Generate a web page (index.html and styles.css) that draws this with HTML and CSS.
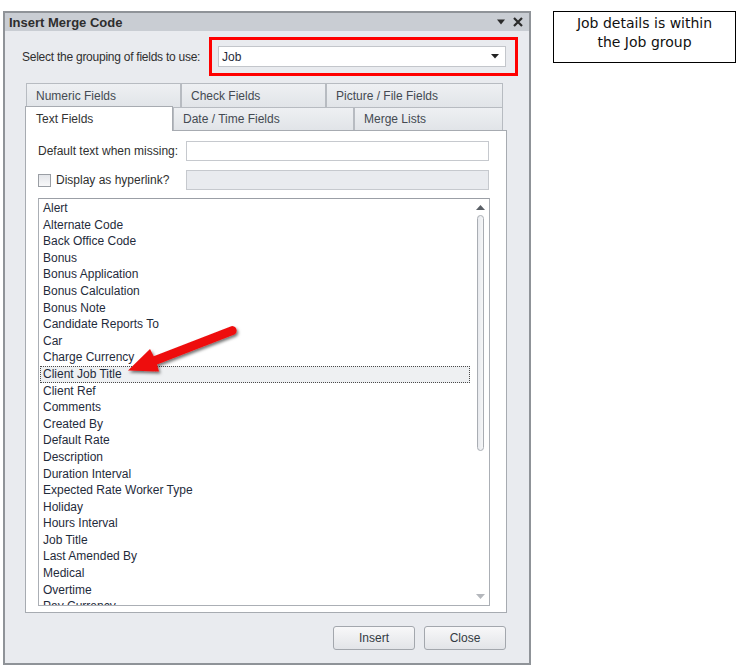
FILE: index.html
```html
<!DOCTYPE html>
<html>
<head>
<meta charset="utf-8">
<link rel="stylesheet" href="styles.css">
</head>
<body>
<div class="dialog">
  <div class="titlebar">
    <span class="title">Insert Merge Code</span>
    <span class="title-icons">
      <svg width="8" height="6" viewBox="0 0 8 6"><path d="M0 0.5 H8 L4 5.5 Z" fill="#2b2b2b"/></svg>
      <svg width="10" height="10" viewBox="0 0 10 10"><path d="M1 1 L9 9 M9 1 L1 9" stroke="#2b2b2b" stroke-width="2.2"/></svg>
    </span>
  </div>
  <div class="group-row">
    <span class="label">Select the grouping of fields to use:</span>
    <div class="redbox">
      <div class="combo">
        <span>Job</span>
        <svg width="8" height="5" viewBox="0 0 8 5"><path d="M0 0 H8 L4 4.5 Z" fill="#222"/></svg>
      </div>
    </div>
  </div>
  <div class="tabs">
    <div class="tab-row row1">
      <div class="tab w155">Numeric Fields</div>
      <div class="tab w145">Check Fields</div>
      <div class="tab w177">Picture / File Fields</div>
    </div>
    <div class="tab-row row2">
      <div class="tab sel w148">Text Fields</div>
      <div class="tab w181">Date / Time Fields</div>
      <div class="tab w149">Merge Lists</div>
    </div>
    <div class="panel">
      <div class="form-row">
        <span class="flabel">Default text when missing:</span>
        <div class="input"></div>
      </div>
      <div class="form-row row-check">
        <span class="flabel check-label"><span class="checkbox"></span>Display as hyperlink?</span>
        <div class="input disabled"></div>
      </div>
      <div class="listbox">
        <div class="items">
          <div class="item">Alert</div>
          <div class="item">Alternate Code</div>
          <div class="item">Back Office Code</div>
          <div class="item">Bonus</div>
          <div class="item">Bonus Application</div>
          <div class="item">Bonus Calculation</div>
          <div class="item">Bonus Note</div>
          <div class="item">Candidate Reports To</div>
          <div class="item">Car</div>
          <div class="item">Charge Currency</div>
          <div class="item selected">Client Job Title</div>
          <div class="item">Client Ref</div>
          <div class="item">Comments</div>
          <div class="item">Created By</div>
          <div class="item">Default Rate</div>
          <div class="item">Description</div>
          <div class="item">Duration Interval</div>
          <div class="item">Expected Rate Worker Type</div>
          <div class="item">Holiday</div>
          <div class="item">Hours Interval</div>
          <div class="item">Job Title</div>
          <div class="item">Last Amended By</div>
          <div class="item">Medical</div>
          <div class="item">Overtime</div>
          <div class="item">Pay Currency</div>
        </div>
        <div class="scrollbar">
          <svg class="arrow-up" width="9" height="5" viewBox="0 0 9 5"><path d="M0 5 H9 L4.5 0 Z" fill="#5a5f66"/></svg>
          <div class="thumb"></div>
          <svg class="arrow-down" width="9" height="5" viewBox="0 0 9 5"><path d="M0 0 H9 L4.5 5 Z" fill="#b4b7bc"/></svg>
        </div>
      </div>
    </div>
  </div>
  <div class="buttons">
    <div class="btn">Insert</div>
    <div class="btn">Close</div>
  </div>
  <svg class="pointer" width="140" height="70" viewBox="100 310 140 70">
    <defs>
      <filter id="sh" x="-20%" y="-30%" width="140%" height="160%">
        <feDropShadow dx="1.5" dy="2" stdDeviation="1.6" flood-color="#000" flood-opacity="0.55"/>
      </filter>
    </defs>
    <path filter="url(#sh)" fill="#ee1111" d="M126 370.5 L157 371.5 L155 364.6 L231.8 334.8 A4.4 4.4 0 0 0 228.6 326.4 L151.7 356.2 L148 349 Z"/>
  </svg>
</div>
<div class="note">Job details is within<br>the Job group</div>
</body>
</html>
```

FILE: styles.css
```css
html, body {
  margin: 0;
  padding: 0;
  background: #ffffff;
}
body {
  display: flex;
  align-items: flex-start;
  font-family: "Liberation Sans", Arial, sans-serif;
  font-size: 12px;
  color: #333333;
}
.dialog {
  position: relative;
  box-sizing: border-box;
  margin: 11px 0 0 3px;
  width: 528px;
  height: 654px;
  border: 2px solid #8f9398;
  background: #e9ebef;
  display: flex;
  flex-direction: column;
}
.titlebar {
  height: 18px;
  background: #c9cdd3;
  display: flex;
  align-items: center;
  justify-content: space-between;
  padding: 0 6px 0 4px;
}
.title {
  font-weight: bold;
  font-size: 13px;
  color: #2e2e2e;
}
.title-icons {
  display: flex;
  align-items: center;
  gap: 8px;
}
.group-row {
  display: flex;
  align-items: center;
  justify-content: space-between;
  margin-top: 6px;
  padding: 0 11px 0 17px;
}
.label {
  color: #2f2f2f;
  white-space: nowrap;
  flex-shrink: 0;
  letter-spacing: -0.25px;
}
.redbox {
  box-sizing: border-box;
  flex-shrink: 0;
  width: 309px;
  height: 39px;
  border: 3px solid #ff0000;
  padding: 6px 9px 6px 6px;
}
.combo {
  box-sizing: border-box;
  height: 21px;
  background: #ffffff;
  border: 1px solid #c3c6cb;
  display: flex;
  align-items: center;
  justify-content: space-between;
  padding: 0 6px 0 3px;
  color: #1f2b3b;
}
.tabs {
  margin: 7px 0 0 20px;
  width: 482px;
}
.tab-row {
  display: flex;
}
.row1 {
  padding-left: 1px;
  height: 24px;
}
.row2 {
  height: 23px;
}
.tab {
  box-sizing: border-box;
  border: 1px solid #b7bbc1;
  border-bottom: none;
  background: linear-gradient(#eef0f3, #e1e4e8);
  color: #444a52;
  padding: 5px 0 0 9px;
  height: 100%;
}
.row2 .tab {
  padding-top: 4px;
}
.tab.sel {
  background: #ffffff;
  height: 25px;
  margin-top: -1px;
  position: relative;
  z-index: 1;
  padding: 5px 0 0 10px;
  color: #333333;
  border-color: #a7abb1;
}
.w155 { width: 155px; }
.w145 { width: 145px; }
.w177 { width: 177px; }
.w148 { width: 148px; }
.w181 { width: 181px; }
.w149 { width: 149px; }
.panel {
  box-sizing: border-box;
  width: 482px;
  height: 483px;
  background: #ffffff;
  border: 1px solid #a7abb1;
  padding: 10px 17px 0 12px;
}
.form-row {
  display: flex;
  align-items: center;
  justify-content: space-between;
  height: 20px;
}
.row-check {
  margin-top: 9px;
}
.flabel {
  color: #2f2f2f;
}
.check-label {
  display: flex;
  align-items: center;
}
.checkbox {
  box-sizing: border-box;
  width: 13px;
  height: 13px;
  border: 1px solid #9a9ea4;
  background: linear-gradient(#e4e6ea, #f8f8f9);
  margin-right: 5px;
}
.input {
  box-sizing: border-box;
  width: 303px;
  height: 20px;
  border: 1px solid #c6c9ce;
  background: #ffffff;
}
.input.disabled {
  background: #e9ebef;
}
.listbox {
  box-sizing: border-box;
  margin-top: 8px;
  width: 452px;
  height: 408px;
  border: 1px solid #abafb5;
  border-top-color: #9b9fa6;
  display: flex;
  overflow: hidden;
}
.items {
  flex: 1;
  padding-top: 1px;
  overflow: hidden;
}
.item {
  box-sizing: border-box;
  height: 16.6px;
  line-height: 16.6px;
  padding-left: 4px;
  color: #1f2b3b;
  white-space: nowrap;
}
.item.selected {
  background: #eef0f2;
  outline: 1px dotted #4a4a4a;
  outline-offset: -1px;
  margin: 0 2px 0 1px;
  padding-left: 3px;
}
.scrollbar {
  width: 17px;
  position: relative;
  display: flex;
  flex-direction: column;
  align-items: center;
}
.arrow-up {
  margin-top: 6px;
}
.thumb {
  box-sizing: border-box;
  margin-top: 5px;
  width: 7px;
  height: 236px;
  border: 1px solid #a9adb3;
  border-radius: 4px;
  background: linear-gradient(90deg, #e8eaee, #f6f7f8);
}
.arrow-down {
  margin-top: auto;
  margin-bottom: 6px;
}
.buttons {
  display: flex;
  justify-content: flex-end;
  gap: 9px;
  margin-top: 13px;
  padding-right: 23px;
}
.btn {
  box-sizing: border-box;
  width: 82px;
  height: 24px;
  border: 1px solid #a3a7ad;
  border-radius: 3px;
  background: linear-gradient(#f8f8f9, #e2e4e8);
  display: flex;
  align-items: center;
  justify-content: center;
  color: #333a42;
}
.pointer {
  position: absolute;
  left: 97px;
  top: 297px;
  overflow: visible;
}
.note {
  box-sizing: border-box;
  margin: 11px 0 0 22px;
  width: 183px;
  height: 52px;
  border: 1px solid #000000;
  text-align: center;
  font-family: "DejaVu Sans", sans-serif;
  font-size: 14px;
  line-height: 19px;
  padding-top: 2px;
  color: #111111;
}
```
